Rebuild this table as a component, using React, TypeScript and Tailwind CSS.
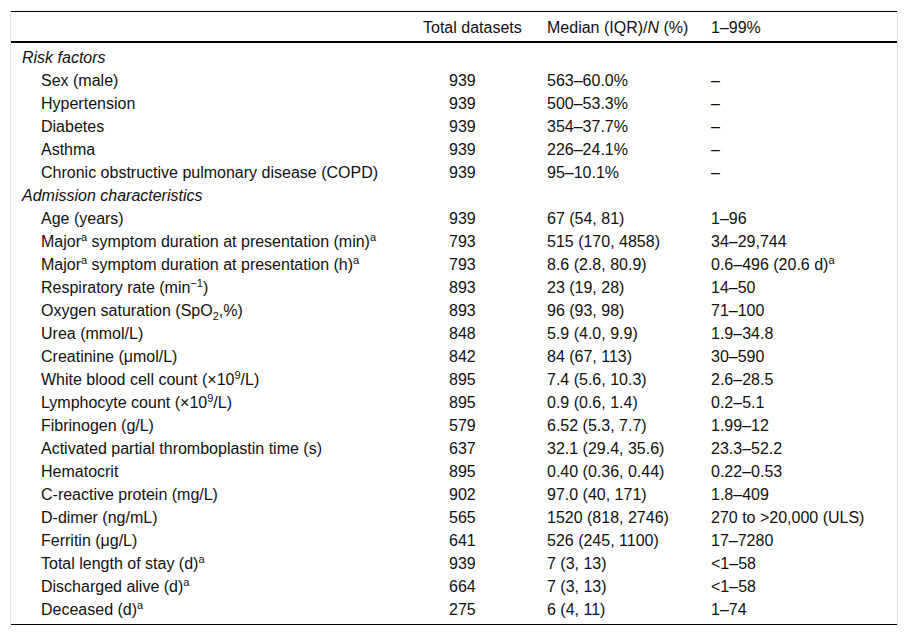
import React from "react";

type Row =
  | { section: string }
  | { label: React.ReactNode; total: string; median: string; range: React.ReactNode };

const Sup = ({ children }: { children: React.ReactNode }) => (
  <span className="relative top-[-6px] text-[11px] leading-none">{children}</span>
);
const A = () => <Sup>a</Sup>;

const rows: Row[] = [
  { section: "Risk factors" },
  { label: "Sex (male)", total: "939", median: "563–60.0%", range: "–" },
  { label: "Hypertension", total: "939", median: "500–53.3%", range: "–" },
  { label: "Diabetes", total: "939", median: "354–37.7%", range: "–" },
  { label: "Asthma", total: "939", median: "226–24.1%", range: "–" },
  { label: "Chronic obstructive pulmonary disease (COPD)", total: "939", median: "95–10.1%", range: "–" },
  { section: "Admission characteristics" },
  { label: "Age (years)", total: "939", median: "67 (54, 81)", range: "1–96" },
  {
    label: (
      <>
        Major<A /> symptom duration at presentation (min)<A />
      </>
    ),
    total: "793",
    median: "515 (170, 4858)",
    range: "34–29,744",
  },
  {
    label: (
      <>
        Major<A /> symptom duration at presentation (h)<A />
      </>
    ),
    total: "793",
    median: "8.6 (2.8, 80.9)",
    range: (
      <>
        0.6–496 (20.6 d)<A />
      </>
    ),
  },
  {
    label: (
      <>
        Respiratory rate (min<Sup>−1</Sup>)
      </>
    ),
    total: "893",
    median: "23 (19, 28)",
    range: "14–50",
  },
  {
    label: (
      <>
        Oxygen saturation (SpO<span className="relative top-[4px] text-[11px] leading-none">2</span>,%)
      </>
    ),
    total: "893",
    median: "96 (93, 98)",
    range: "71–100",
  },
  { label: "Urea (mmol/L)", total: "848", median: "5.9 (4.0, 9.9)", range: "1.9–34.8" },
  { label: "Creatinine (μmol/L)", total: "842", median: "84 (67, 113)", range: "30–590" },
  {
    label: (
      <>
        White blood cell count (×10<Sup>9</Sup>/L)
      </>
    ),
    total: "895",
    median: "7.4 (5.6, 10.3)",
    range: "2.6–28.5",
  },
  {
    label: (
      <>
        Lymphocyte count (×10<Sup>9</Sup>/L)
      </>
    ),
    total: "895",
    median: "0.9 (0.6, 1.4)",
    range: "0.2–5.1",
  },
  { label: "Fibrinogen (g/L)", total: "579", median: "6.52 (5.3, 7.7)", range: "1.99–12" },
  { label: "Activated partial thromboplastin time (s)", total: "637", median: "32.1 (29.4, 35.6)", range: "23.3–52.2" },
  { label: "Hematocrit", total: "895", median: "0.40 (0.36, 0.44)", range: "0.22–0.53" },
  { label: "C-reactive protein (mg/L)", total: "902", median: "97.0 (40, 171)", range: "1.8–409" },
  { label: "D-dimer (ng/mL)", total: "565", median: "1520 (818, 2746)", range: "270 to >20,000 (ULS)" },
  { label: "Ferritin (μg/L)", total: "641", median: "526 (245, 1100)", range: "17–7280" },
  {
    label: (
      <>
        Total length of stay (d)<A />
      </>
    ),
    total: "939",
    median: "7 (3, 13)",
    range: "<1–58",
  },
  {
    label: (
      <>
        Discharged alive (d)<A />
      </>
    ),
    total: "664",
    median: "7 (3, 13)",
    range: "<1–58",
  },
  {
    label: (
      <>
        Deceased (d)<A />
      </>
    ),
    total: "275",
    median: "6 (4, 11)",
    range: "1–74",
  },
];

const cols = "grid grid-cols-[412px_124px_164px_186px]";

export default function App() {
  return (
    <div className="min-h-[637px] bg-white pt-[10px] px-[10px] text-[16px] text-[#111] font-['Liberation_Sans',Arial,sans-serif]">
      <div className="w-[888px] border-x border-[#e4e4e4] pb-[2px]">
        <div className="border-t border-black mt-[1px]">
          <div className={`${cols} h-[31px] pt-[2px] items-center border-b-2 border-black`}>
            <div />
            <div>Total datasets</div>
            <div>
              Median (IQR)/<i>N</i> (%)
            </div>
            <div>1–99%</div>
          </div>
          <div className="border-b border-black pt-[3px] pb-[3px]">
            {rows.map((r, i) =>
              "section" in r ? (
                <div key={i} className="h-[23px] flex items-center pl-[11px] italic">
                  {r.section}
                </div>
              ) : (
                <div key={i} className={`${cols} h-[23px] items-center`}>
                  <div className="pl-[30px] whitespace-nowrap">{r.label}</div>
                  <div className="pl-[26px]">{r.total}</div>
                  <div>{r.median}</div>
                  <div className="whitespace-nowrap">{r.range}</div>
                </div>
              )
            )}
          </div>
        </div>
      </div>
    </div>
  );
}
